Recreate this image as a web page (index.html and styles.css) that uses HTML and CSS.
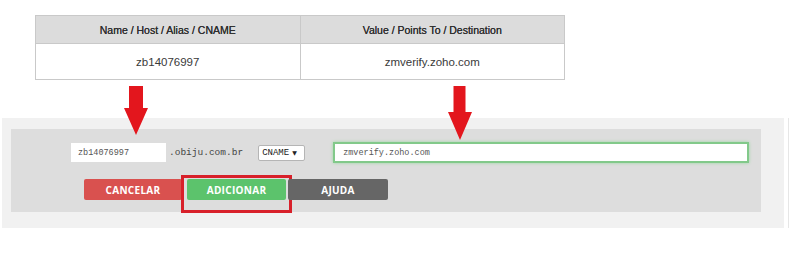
FILE: index.html
```html
<!DOCTYPE html>
<html lang="pt">
<head>
<meta charset="utf-8">
<title>DNS CNAME</title>
<link rel="stylesheet" href="styles.css">
</head>
<body>
<table class="dns-table">
  <thead>
    <tr><th>Name / Host / Alias / CNAME</th><th>Value / Points To / Destination</th></tr>
  </thead>
  <tbody>
    <tr><td>zb14076997</td><td>zmverify.zoho.com</td></tr>
  </tbody>
</table>

<div class="panel-wrap">
  <div class="panel-outer">
    <div class="panel-inner">
      <div class="fields">
        <div class="input host">zb14076997</div>
        <span class="domain">.obiju.com.br</span>
        <div class="select">CNAME <span class="caret">&#9660;</span></div>
        <div class="input value">zmverify.zoho.com</div>
      </div>
      <div class="actions">
        <button class="btn btn-cancel">CANCELAR</button>
        <button class="btn btn-add">ADICIONAR<span class="highlight"></span></button>
        <button class="btn btn-help">AJUDA</button>
      </div>
    </div>
  </div>
</div>

<svg class="arrow arrow-host" width="26" height="49" viewBox="0 0 26 49"><path d="M6 0H20V22H25L13 49L1 22H6Z" fill="#e3161d"/></svg>
<svg class="arrow arrow-value" width="24" height="54" viewBox="0 0 24 54"><path d="M5.5 0H17.5V26H24L12 54L0 26H5.5Z" fill="#e3161d"/></svg>
</body>
</html>
```

FILE: styles.css
```css
html, body {
  margin: 0;
  padding: 0;
  background: #ffffff;
}
body {
  position: relative;
  width: 800px;
  height: 261px;
  overflow: hidden;
  font-family: "Liberation Sans", Arial, sans-serif;
}

.dns-table {
  margin: 15px 0 0 35px;
  width: 530px;
  border-collapse: collapse;
  border: 1px solid #c9c9c9;
}
.dns-table th {
  height: 27px;
  padding: 0;
  background: #dcdcdc;
  font-weight: normal;
  font-size: 10.5px;
  color: #2e2e2e;
  text-shadow: 0 0 0.3px #2e2e2e;
  border: 1px solid #c9c9c9;
  width: 50%;
}
.dns-table td {
  height: 35px;
  padding: 0;
  text-align: center;
  font-size: 11.5px;
  color: #3a3a3a;
  border: 1px solid #c9c9c9;
  background: #ffffff;
}

.panel-wrap {
  margin: 38px 0 0 2px;
  width: 786px;
  border-right: 1px solid #e6e6e6;
}
.panel-outer {
  width: 782px;
  height: 110px;
  box-sizing: border-box;
  padding: 11px 0 0 9px;
  background: #f1f1f1;
}
.panel-inner {
  width: 750px;
  height: 83px;
  box-sizing: border-box;
  padding: 13px 0 0 60px;
  background: #dddddd;
}

.fields {
  display: flex;
  align-items: center;
  height: 21px;
}
.input {
  box-sizing: border-box;
  background: #ffffff;
  font-family: "Liberation Mono", "Courier New", monospace;
  font-size: 8.5px;
  color: #555555;
  display: flex;
  align-items: center;
}
.host {
  width: 95px;
  height: 19px;
  padding-left: 7px;
}
.domain {
  margin-left: 3px;
  font-family: "Liberation Mono", "Courier New", monospace;
  font-size: 9.5px;
  color: #444444;
}
.select {
  margin-left: 15px;
  width: 47px;
  height: 16px;
  box-sizing: border-box;
  border: 1px solid #b5b5b5;
  border-radius: 2px;
  background: #ffffff;
  font-family: "Liberation Mono", "Courier New", monospace;
  font-size: 9px;
  color: #222222;
  display: flex;
  align-items: center;
  padding-left: 3px;
  gap: 3px;
}
.caret {
  font-family: "DejaVu Sans", sans-serif;
  font-size: 6px;
}
.value {
  margin-left: 28px;
  width: 416px;
  height: 21px;
  border: 2px solid #82c98a;
  box-shadow: 0 0 3px #9ad7a0;
  padding-left: 8px;
}

.actions {
  display: flex;
  margin: 16px 0 0 13px;
}
.btn {
  position: relative;
  height: 21px;
  border: 0;
  border-radius: 2px;
  padding: 0;
  color: #ffffff;
  font-family: "Open Sans", "Liberation Sans", sans-serif;
  font-weight: 700;
  font-size: 10px;
  letter-spacing: 0.3px;
}
.btn-cancel {
  width: 98px;
  background: #d9514f;
}
.btn-add {
  width: 99px;
  margin-left: 5px;
  background: #5cc36c;
}
.btn-help {
  width: 100px;
  margin-left: 2px;
  background: #666666;
}
.highlight {
  position: absolute;
  left: -6px;
  right: -6px;
  top: -4px;
  bottom: -13px;
  border: 3px solid #d8202a;
}

.arrow {
  position: absolute;
}
.arrow-host {
  left: 123px;
  top: 86px;
}
.arrow-value {
  left: 448px;
  top: 86px;
}
```
